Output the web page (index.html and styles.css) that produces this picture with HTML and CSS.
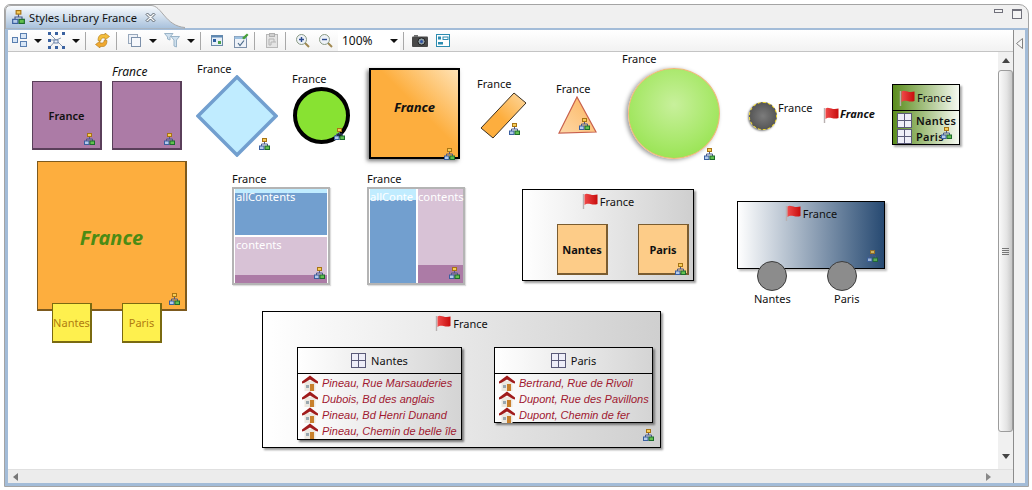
FILE: index.html
```html
<!DOCTYPE html>
<html lang="fr">
<head>
    <meta charset="UTF-8">
    <title>Styles Library France</title>
    <link rel="stylesheet" href="styles.css">
</head>
<body>
<svg class="defs" width="0" height="0">
    <defs>
        <linearGradient id="flagRed" x1="0" y1="0" x2="1" y2="0">
            <stop offset="0" stop-color="#f04a4a"/><stop offset="1" stop-color="#c80c0c"/>
        </linearGradient>
        <linearGradient id="rotFill" x1="0" y1="1" x2="1" y2="0">
            <stop offset="0.45" stop-color="#fdae3e"/><stop offset="1" stop-color="#fdd8a0"/>
        </linearGradient>
        <linearGradient id="triFill" x1="0" y1="1" x2="1" y2="0">
            <stop offset="0" stop-color="#fdd8a8"/><stop offset="1" stop-color="#fcb45c"/>
        </linearGradient>
        <symbol id="hier" viewBox="0 0 11 12">
            <path d="M5.5 3.5V6M2.5 8V6H8.5V8" fill="none" stroke="#4a5a8a"/>
            <rect x="3.5" y="0.5" width="4" height="3" fill="#f6cd5a" stroke="#a87414"/>
            <rect x="0.5" y="8" width="4.5" height="3.5" fill="#b4cbea" stroke="#3a5fa0"/>
            <rect x="6" y="8" width="4.5" height="3.5" fill="#62c04e" stroke="#1d6b2c"/>
        </symbol>
        <symbol id="flag" viewBox="0 0 16 16">
            <path d="M1.5 1V16" stroke="#b8b0b0" stroke-width="1.4"/>
            <path d="M2.500 1.500C5 0 7 1.500 10 2C12 2.300 14 2 15.500 1.600V11C13 12 11 11.600 8.500 11C6 10.400 4 10.600 2.500 12Z" fill="url(#flagRed)"/>
        </symbol>
        <symbol id="grid" viewBox="0 0 15 15">
            <rect x="0.5" y="0.5" width="14" height="14" fill="#eeeef8" stroke="#5a5a78"/>
            <path d="M7.5 1V14M1 7.5H14" stroke="#5a5a78"/>
        </symbol>
        <symbol id="house" viewBox="0 0 16 16">
            <rect x="2.500" y="6" width="11" height="10" fill="#ece8e0"/>
            <rect x="8" y="9" width="4" height="7" fill="#c8802c"/>
            <rect x="4" y="10" width="3" height="3" fill="#9aa8b0"/>
            <path d="M0 6.500L8 0.500L16 6.500V8.500L14 8L8 4.500L2 8L0 8.500Z" fill="#a01c1c"/>
        </symbol>
    </defs>
</svg>

<div class="pane">
    <div class="tabstrip">
        <div class="tab">
            <svg class="tab-shape" width="180" height="24" viewBox="0 0 180 24">
                <defs>
                    <linearGradient id="tabFill" x1="0" y1="0" x2="0" y2="1">
                        <stop offset="0" stop-color="#fafcfe"/><stop offset="1" stop-color="#a5bfdb"/>
                    </linearGradient>
                </defs>
                <path d="M0.5 24V6Q0.5 0.5 6 0.5H146C157 0.5 160 21 180 22.5V24Z" fill="url(#tabFill)" stroke="#a8a8a8"/>
            </svg>
            <svg class="ico tab-ico" width="13" height="14"><use href="#hier"/></svg>
            <span class="tab-title">Styles Library France</span>
            <svg class="tab-close" width="11" height="11" viewBox="0 0 11 11">
                <path d="M1 2.5L2.5 1L5.5 4L8.500 1L10 2.5L7 5.500L10 8.500L8.500 10L5.500 7L2.500 10L1 8.500L4 5.500Z" fill="#f8f8f8" stroke="#5c6670"/>
            </svg>
        </div>
        <div class="win-btns">
            <span class="win-min"></span>
            <span class="win-max"></span>
        </div>
    </div>

    <div class="editor">
        <div class="main">
            <div class="toolbar">
                <svg class="t t1" width="15" height="15" viewBox="0 0 15 15"><g fill="#d8e6f6" stroke="#5a7fb0"><rect x="0.500" y="4.500" width="5" height="5"/><rect x="8.500" y="0.500" width="6" height="5"/><rect x="8.500" y="8.500" width="6" height="5"/></g></svg>
                <i class="arrow a1"></i>
                <svg class="t t2" width="17" height="17" viewBox="0 0 17 17"><path d="M2 2L15 15M2 15L8 8M2 8H8" stroke="#8a9ab0" fill="none"/><path d="M8 8L13 6" stroke="#8a9ab0"/><g fill="#3a62a0"><rect x="0" y="0" width="3" height="3"/><rect x="7" y="0" width="3" height="3"/><rect x="14" y="0" width="3" height="3"/><rect x="0" y="7" width="3" height="3"/><rect x="0" y="14" width="3" height="3"/><rect x="7" y="14" width="3" height="3"/><rect x="14" y="14" width="3" height="3"/></g><rect x="6" y="8" width="4" height="3" fill="#e8eef8" stroke="#6a82a8"/></svg>
                <i class="arrow a2"></i>
                <i class="sep s1"></i>
                <svg class="t t3" width="15" height="15" viewBox="0 0 15 15"><path d="M7 1.500H10V0L14.500 3.500L10 7V5H8C6.500 5 6 6 6 7.500H3C3 4 4.500 1.500 7 1.500Z" fill="#f4be3c" stroke="#b07a18" stroke-width="0.600"/><path d="M8 13.500H5V15L0.500 11.500L5 8V10H7C8.500 10 9 9 9 7.500H12C12 11 10.500 13.500 8 13.500Z" fill="#f0a830" stroke="#b07a18" stroke-width="0.600"/></svg>
                <i class="sep s2"></i>
                <svg class="t t4" width="13" height="13" viewBox="0 0 13 13"><rect x="0.500" y="0.500" width="9" height="9" fill="#eef2f8" stroke="#98a8bc"/><rect x="3.500" y="3.500" width="9" height="9" fill="#f6f8fc" stroke="#7c90aa"/></svg>
                <i class="arrow a3"></i>
                <svg class="t t5" width="16" height="15" viewBox="0 0 16 15"><g fill="#cfe0ee" stroke="#9ab4c8"><path d="M0.500 0.500H9L6 4V7L3.500 6V4Z"/><path d="M7 3.500H15.500L12.500 7V14L10 13V7Z"/></g></svg>
                <i class="arrow a4"></i>
                <i class="sep s3"></i>
                <svg class="t t6" width="12" height="11" viewBox="0 0 12 11"><rect x="0.500" y="0.500" width="11" height="10" fill="#e8f0f8" stroke="#6a8aa8"/><rect x="0.500" y="0.500" width="11" height="2" fill="#5c88b4"/><rect x="2" y="4" width="3" height="3" fill="#2c5ea0"/><rect x="7" y="6" width="3" height="3" fill="#4aa04a"/></svg>
                <svg class="t t7" width="15" height="15" viewBox="0 0 15 15"><rect x="0.500" y="3.500" width="12" height="11" fill="#eef2f8" stroke="#7c90aa"/><rect x="0.500" y="3.500" width="12" height="2.500" fill="#9cc0e0"/><path d="M4 10L6 12.500L10 7.500" fill="none" stroke="#4a6a8a" stroke-width="1.200"/><path d="M8 5L13 0.500L14.500 2L10 6.500Z" fill="#48a038"/></svg>
                <i class="sep s4"></i>
                <svg class="t t8" width="12" height="15" viewBox="0 0 12 15"><rect x="0.500" y="1.500" width="11" height="13" fill="#e4e4e4" stroke="#b8b8b8"/><rect x="3.500" y="0.500" width="5" height="3" fill="#d0d0d0" stroke="#b0b0b0"/><path d="M3 6H8V9H5V12H3ZM8 9H10" fill="none" stroke="#b4b4b4"/></svg>
                <i class="sep s5"></i>
                <svg class="t t9" width="14" height="14" viewBox="0 0 14 14"><path d="M9 9L13 13" stroke="#a08850" stroke-width="2"/><circle cx="5.500" cy="5.500" r="5" fill="#eef2f8" stroke="#8a9a84"/><path d="M3 5.500H8M5.500 3V8" stroke="#2c4c90" stroke-width="1.400"/></svg>
                <svg class="t t10" width="14" height="14" viewBox="0 0 14 14"><path d="M9 9L13 13" stroke="#a08850" stroke-width="2"/><circle cx="5.500" cy="5.500" r="5" fill="#eef2f8" stroke="#8a9a84"/><path d="M3 5.500H8" stroke="#2c4c90" stroke-width="1.400"/></svg>
                <div class="combo"><span class="combo-val">100%</span><i class="arrow a5"></i></div>
                <i class="sep s6"></i>
                <svg class="t t11" width="16" height="12" viewBox="0 0 16 12"><rect x="0" y="1.500" width="16" height="10.500" rx="1" fill="#484848"/><rect x="2" y="0" width="4" height="2" fill="#707070"/><circle cx="9.500" cy="6.500" r="3.600" fill="#90a0a8" stroke="#202020"/><circle cx="9.500" cy="6.500" r="1.500" fill="#3050a0"/></svg>
                <svg class="t t12" width="14" height="13" viewBox="0 0 14 13"><rect x="0.500" y="0.500" width="13" height="12" fill="#fff" stroke="#2c8cb0"/><rect x="2" y="2.500" width="3" height="3" fill="#2c8cb0"/><rect x="7" y="3" width="5" height="2.500" fill="none" stroke="#2c8cb0"/><rect x="2" y="8" width="5" height="2.500" fill="#2c8cb0"/></svg>
            </div>

            <div class="view">
                <div class="canvas">
                    <!-- first row -->
                    <div class="node box purple p1"><b class="mid">France</b></div>
                    <span class="lbl it l-p2">France</span>
                    <div class="node box purple p2"></div>
                    <svg class="hi h-p1"><use href="#hier"/></svg>
                    <svg class="hi h-p2"><use href="#hier"/></svg>

                    <span class="lbl l-dia">France</span>
                    <svg class="node dia" width="82" height="82" viewBox="0 0 82 82"><path d="M41 2L80 41L41 80L2 41Z" fill="#c0ecff" stroke="#729fcf" stroke-width="3.500"/></svg>
                    <svg class="hi h-dia"><use href="#hier"/></svg>

                    <span class="lbl l-cir">France</span>
                    <div class="node cir"></div>
                    <svg class="hi h-cir"><use href="#hier"/></svg>

                    <div class="node grad-sq"><b class="mid it big">France</b></div>
                    <svg class="hi h-sq"><use href="#hier"/></svg>

                    <span class="lbl l-rot">France</span>
                    <svg class="node rot" width="50" height="50" viewBox="0 0 50 50"><path d="M33 1L45 11L12 46L0 36Z" transform="translate(1 0)" fill="url(#rotFill)" stroke="#3c3020"/></svg>
                    <svg class="hi h-rot"><use href="#hier"/></svg>

                    <span class="lbl l-tri">France</span>
                    <svg class="node tri" width="40" height="38" viewBox="0 0 40 38"><path d="M19 1L38 36L1 37Z" fill="url(#triFill)" stroke="#c8604c" stroke-width="1.200"/></svg>
                    <svg class="hi h-tri"><use href="#hier"/></svg>

                    <span class="lbl l-ball">France</span>
                    <div class="node ball"></div>
                    <svg class="hi h-ball"><use href="#hier"/></svg>

                    <div class="node dark"></div>
                    <span class="lbl l-dark">France</span>

                    <svg class="node fl f-note"><use href="#flag"/></svg>
                    <b class="lbl it l-note">France</b>

                    <div class="node mini">
                        <div class="mini-head"><svg class="fl-in"><use href="#flag"/></svg><span>France</span></div>
                        <div class="mini-row"><svg class="gr"><use href="#grid"/></svg><span>Nantes</span></div>
                        <div class="mini-row"><svg class="gr"><use href="#grid"/></svg><span>Paris</span></div>
                    </div>
                    <svg class="hi h-mini"><use href="#hier"/></svg>

                    <!-- second row -->
                    <div class="node box big-or"><b class="mid it green">France</b></div>
                    <svg class="hi h-bigor"><use href="#hier"/></svg>
                    <div class="node port po1">Nantes</div>
                    <div class="node port po2">Paris</div>

                    <span class="lbl l-c1">France</span>
                    <div class="node comp c1">
                        <div class="c1-a"><span>allContents</span></div>
                        <div class="c1-b"><span>contents</span></div>
                    </div>
                    <svg class="hi h-c1"><use href="#hier"/></svg>

                    <span class="lbl l-c2">France</span>
                    <div class="node comp c2">
                        <div class="c2-a"><span>allConte</span></div>
                        <div class="c2-b"><span>contents</span></div>
                    </div>
                    <svg class="hi h-c2"><use href="#hier"/></svg>

                    <div class="node cont ct1">
                        <div class="cont-head"><svg class="fl-in"><use href="#flag"/></svg><span>France</span></div>
                        <div class="ct1-body">
                            <div class="box peach">Nantes</div>
                            <div class="box peach">Paris</div>
                        </div>
                    </div>
                    <svg class="hi h-ct1"><use href="#hier"/></svg>

                    <div class="node cont truck">
                        <div class="cont-head"><svg class="fl-in"><use href="#flag"/></svg><span>France</span></div>
                    </div>
                    <svg class="hi h-truck"><use href="#hier"/></svg>
                    <div class="node wheel w1"></div>
                    <div class="node wheel w2"></div>
                    <span class="lbl l-w1">Nantes</span>
                    <span class="lbl l-w2">Paris</span>

                    <!-- third row -->
                    <div class="node cont ct2">
                        <div class="cont-head"><svg class="fl-in"><use href="#flag"/></svg><span>France</span></div>
                    </div>
                    <div class="node city city-n">
                        <div class="city-head"><svg class="gr"><use href="#grid"/></svg><span>Nantes</span></div>
                        <ul class="addr">
                            <li><svg class="hs"><use href="#house"/></svg>Pineau, Rue Marsauderies</li>
                            <li><svg class="hs"><use href="#house"/></svg>Dubois, Bd des anglais</li>
                            <li><svg class="hs"><use href="#house"/></svg>Pineau, Bd Henri Dunand</li>
                            <li><svg class="hs"><use href="#house"/></svg>Pineau, Chemin de belle île</li>
                        </ul>
                    </div>
                    <div class="node city city-p">
                        <div class="city-head"><svg class="gr"><use href="#grid"/></svg><span>Paris</span></div>
                        <ul class="addr">
                            <li><svg class="hs"><use href="#house"/></svg>Bertrand, Rue de Rivoli</li>
                            <li><svg class="hs"><use href="#house"/></svg>Dupont, Rue des Pavillons</li>
                            <li><svg class="hs"><use href="#house"/></svg>Dupont, Chemin de fer</li>
                        </ul>
                    </div>
                    <svg class="hi h-ct2"><use href="#hier"/></svg>
                </div>
                <div class="vscroll">
                    <i class="up"></i>
                    <div class="thumb"><i class="grip"></i></div>
                    <i class="down"></i>
                </div>
            </div>

            <div class="hscroll">
                <i class="left"></i>
                <i class="right"></i>
            </div>
        </div>
        <div class="trim">
            <svg width="7" height="11" viewBox="0 0 7 11"><path d="M6.500 0.500V10.500L0.500 5.500Z" fill="#f6f6f6" stroke="#808080"/></svg>
        </div>
    </div>
</div>
</body>
</html>
```

FILE: styles.css
```css
* { box-sizing: border-box; }
html, body { margin: 0; padding: 0; }
body { width: 1032px; height: 490px; background: #fff; font-family: "Noto Sans", "Open Sans", sans-serif; font-size: 11px; color: #111; overflow: hidden; }
.defs { position: absolute; }
svg { display: block; }
i { display: block; font-style: normal; }

.pane { margin: 4px 0 0 4px; width: 1025px; height: 483px; border: 1px solid #a4a4a4; border-radius: 6px 10px 0 0; background: #f0f0f0; display: flex; flex-direction: column; }

/* tab strip */
.tabstrip { height: 23px; display: flex; justify-content: space-between; flex: none; }
.tab { position: relative; width: 180px; height: 24px; display: flex; align-items: center; }
.tab-shape { position: absolute; left: 0; top: 0; }
.tab-ico { position: relative; margin-left: 7px; width: 13px; height: 14px; }
.tab-title { position: relative; margin-left: 4px; font-size: 11.2px; color: #111; white-space: nowrap; }
.tab-close { position: relative; margin-left: 8px; }
.win-btns { display: flex; gap: 9px; margin: 4px 6px 0 0; }
.win-min { width: 9px; height: 4px; margin-top: 0; border: 1px solid #70707a; background: #f4f4f4; }
.win-max { width: 10px; height: 10px; border: 1px solid #70707a; border-top-width: 2px; background: #f4f4f4; }

.editor { flex: 1; display: flex; border: solid #a3bcd8; border-width: 2px 3px 3px 3px; min-height: 0; }
.main { width: 1005px; flex: none; display: flex; flex-direction: column; }
.trim { flex: 1; border-left: 1px solid #8c8c8c; background: #f2f2f2; padding: 8px 0 0 2px; }

/* toolbar */
.toolbar { height: 22px; flex: none; display: flex; align-items: center; background: linear-gradient(#fff, #f2f2f2); border-bottom: 1px solid #c4c4c4; position: relative; }
.arrow { width: 0; height: 0; border: 4px solid transparent; border-top: 4px solid #111; border-bottom: 0; flex: none; }
.sep { width: 1px; height: 18px; background: #a8a8a8; flex: none; }
.t { flex: none; }
.t1 { margin-left: 4px; }
.a1 { margin-left: 7px; }
.t2 { margin-left: 6px; }
.a2 { margin-left: 7px; }
.s1 { margin-left: 5px; }
.t3 { margin-left: 9px; }
.s2 { margin-left: 6px; }
.t4 { margin-left: 11px; }
.a3 { margin-left: 8px; }
.t5 { margin-left: 7px; }
.a4 { margin-left: 7px; }
.s3 { margin-left: 5px; }
.t6 { margin-left: 10px; }
.t7 { margin-left: 11px; }
.s4 { margin-left: 5px; }
.t8 { margin-left: 11px; }
.s5 { margin-left: 7px; }
.t9 { margin-left: 10px; }
.t10 { margin-left: 9px; }
.combo { width: 62px; height: 21px; margin-left: 5px; background: #fff; display: flex; align-items: center; justify-content: space-between; padding: 0 2px 0 4px; flex: none; }
.combo-val { font-size: 12px; }
.s6 { margin-left: 3px; }
.t11 { margin-left: 8px; }
.t12 { margin-left: 8px; }

.view { flex: 1; display: flex; min-height: 0; }

/* diagram: nodes sit freely on the canvas */
.canvas { width: 990px; position: relative; background: #fff; overflow: hidden; }
.node { position: absolute; }
.lbl { position: absolute; line-height: 14px; white-space: nowrap; }
.it { font-style: italic; }
.hi { position: absolute; width: 11px; height: 12px; }
.box { border: 1px solid #5a3f5a; border-right-width: 2px; border-bottom-width: 2px; }
.mid { display: flex; align-items: center; justify-content: center; width: 100%; height: 100%; }
.purple { background: #ac7ba6; width: 70px; height: 69px; font-size: 11px; }
.purple .mid { font-weight: 600; padding-top: 1px; }
.p1 { left: 24px; top: 29px; }
.p2 { left: 104px; top: 29px; }
.l-p2 { left: 104px; top: 13px; font-size: 12px; }
.h-p1 { left: 76px; top: 81px; }
.h-p2 { left: 156px; top: 81px; }

.l-dia { left: 189px; top: 10px; }
.dia { left: 188px; top: 23px; }
.h-dia { left: 251px; top: 86px; }

.l-cir { left: 284px; top: 20px; }
.cir { left: 285px; top: 35px; width: 57px; height: 57px; border-radius: 50%; border: 4px solid #000; background: #88e232; }
.h-cir { left: 326px; top: 76px; }

.grad-sq { left: 361px; top: 16px; width: 91px; height: 91px; border: 2px solid #000; background: linear-gradient(45deg, #fdae3e 55%, #ffe2b4 100%); box-shadow: -2px 2px 4px #777; }
.big { font-size: 13px; font-weight: 700; padding-bottom: 13px; }
.h-sq { left: 436px; top: 96px; }

.l-rot { left: 469px; top: 25px; }
.rot { left: 472px; top: 40px; }
.h-rot { left: 501px; top: 71px; }

.l-tri { left: 548px; top: 30px; }
.tri { left: 550px; top: 44px; }
.h-tri { left: 571px; top: 66px; }

.l-ball { left: 614px; top: 0; }
.ball { left: 620px; top: 16px; width: 92px; height: 91px; border-radius: 50%; border: 1px solid #f0b87a; background: radial-gradient(circle at 50% 40%, #c8f09c 0, #a8e86a 55%, #8ce040 100%); box-shadow: -2px 1px 4px #999; }
.h-ball { left: 696px; top: 96px; }

.dark { left: 741px; top: 50px; width: 28px; height: 28px; border-radius: 50%; border: 1px dashed #e8d020; background: radial-gradient(circle, #7c7c7c 0, #484848 100%); box-shadow: -1px 1px 2px #888; }
.l-dark { left: 770px; top: 49px; }
.fl { width: 16px; height: 16px; }
.f-note { left: 815px; top: 55px; }
.l-note { left: 832px; top: 55px; font-weight: 700; }

.mini { left: 884px; top: 32px; width: 68px; height: 61px; border: 1px solid #000; background: linear-gradient(90deg, #5a8c1c, #f6faf2); box-shadow: 2px 2px 2px #aaa; }
.mini-head { height: 26px; display: flex; align-items: center; padding-left: 6px; gap: 2px; border-bottom: 1px solid #000; }
.fl-in { width: 16px; height: 16px; flex: none; }
.mini-row { height: 16px; display: flex; align-items: center; padding-left: 4px; gap: 4px; font-size: 11px; font-weight: 600; letter-spacing: 0.3px; }
.mini-head + .mini-row { margin-top: 1px; }
.gr { width: 15px; height: 15px; flex: none; }
.h-mini { left: 933px; top: 75px; }

.big-or { left: 29px; top: 109px; width: 150px; height: 150px; background: #fdae3e; border-color: #7d5a1e; }
.green { font-size: 20px; font-weight: 700; color: #4b8b14; padding-top: 4px; }
.h-bigor { left: 161px; top: 241px; }
.port { top: 251px; width: 40px; height: 40px; background: #fef04e; border: 1px solid #7a6a10; border-right-width: 2px; border-bottom-width: 2px; color: #b07c10; display: flex; align-items: center; justify-content: center; }
.po1 { left: 44px; }
.po2 { left: 114px; }

.comp { top: 135px; width: 98px; height: 98px; border: 2px solid #b4b4b4; background: #fff; box-shadow: 1px 1px 1px #ddd; padding: 0; color: #fff; font-size: 11.2px; line-height: 14px; }
.l-c1 { left: 224px; top: 120px; }
.l-c2 { left: 359px; top: 120px; }
.c1 { left: 224px; }
.c2 { left: 359px; display: flex; gap: 2px; padding: 0 1px 0 1px; }
.c1-a { height: 46px; margin: 0 1px; background: linear-gradient(#c0ecff 4px, #729fcf 4px); padding: 0 1px; }
.c1-b { height: 46px; margin: 2px 1px 0; background: linear-gradient(#d8c2d6 38px, #ac7ba6 38px); padding: 1px 1px 0; }
.c1-a span, .c2-a span { position: relative; top: 1px; }
.c2-a { flex: none; width: 46px; background: linear-gradient(#c0ecff 11px, #729fcf 11px); overflow: hidden; white-space: nowrap; }
.c2-b { flex: none; width: 45px; background: linear-gradient(#d8c2d6 76px, #ac7ba6 76px); white-space: nowrap; }
.c2-b span { position: relative; top: 1px; }
.h-c1 { left: 306px; top: 215px; }
.h-c2 { left: 441px; top: 215px; }

.cont { border: 1px solid #000; background: linear-gradient(90deg, #fff, #cfcfcf); box-shadow: 2px 2px 2px #999; }
.cont-head { display: flex; align-items: center; justify-content: center; gap: 2px; height: 16px; margin-top: 3px; }
.ct1 { left: 514px; top: 137px; width: 172px; height: 92px; }
.ct1-body { display: flex; gap: 30px; padding-left: 34px; margin-top: 15px; }
.peach { width: 51px; height: 51px; background: #fdcc88; border-color: #7a5c30; display: flex; align-items: center; justify-content: center; font-weight: 700; }
.h-ct1 { left: 667px; top: 211px; }

.truck { left: 729px; top: 149px; width: 148px; height: 68px; background: linear-gradient(90deg, #fff, #274a72); box-shadow: 2px 2px 2px #bbb; }
.h-truck { left: 859px; top: 198px; opacity: 0.8; }
.wheel { top: 209px; width: 30px; height: 30px; border-radius: 50%; background: #8c8c8c; border: 1px solid #3c3c3c; }
.w1 { left: 749px; }
.w2 { left: 819px; }
.l-w1 { left: 746px; top: 240px; }
.l-w2 { left: 826px; top: 240px; }

.ct2 { left: 254px; top: 259px; width: 399px; height: 137px; }
.city { top: 295px; border: 1px solid #000; background: linear-gradient(90deg, #fff, #d4d4d4); box-shadow: 2px 2px 2px #777; }
.city-n { left: 289px; width: 165px; height: 93px; }
.city-p { left: 486px; width: 159px; height: 76px; }
.city-head { height: 26px; display: flex; align-items: center; justify-content: center; gap: 5px; border-bottom: 1px solid #000; padding-bottom: 1px; }
.addr { list-style: none; margin: 1px 0 0; padding: 0 0 0 4px; }
.addr li { height: 16px; display: flex; align-items: center; gap: 4px; font: italic 11px "Liberation Sans", Arial, sans-serif; color: #a01830; white-space: nowrap; }
.hs { width: 16px; height: 16px; flex: none; }
.h-ct2 { left: 635px; top: 377px; }

/* scrollbars */
.vscroll { flex: 1; background: #f0f0f0; display: flex; flex-direction: column; align-items: center; padding-top: 6px; }
.up { width: 0; height: 0; border: 4px solid transparent; border-bottom: 5px solid #444; border-top: 0; }
.thumb { width: 15px; height: 362px; margin-top: 7px; border: 1px solid #9c9c9c; border-radius: 3px; background: linear-gradient(90deg, #fafafa, #e4e4e4 60%, #c8c8c8); display: flex; align-items: center; justify-content: center; }
.grip { width: 7px; height: 7px; background: repeating-linear-gradient(#777 0 1px, transparent 1px 2px); }
.down { width: 0; height: 0; margin-top: 22px; border: 4px solid transparent; border-top: 5px solid #444; border-bottom: 0; }
.hscroll { height: 14px; flex: none; background: #ececec; border-top: 1px solid #e0e0e0; display: flex; justify-content: space-between; align-items: center; padding: 0 22px 0 5px; }
.left { width: 0; height: 0; border: 4px solid transparent; border-right: 5px solid #777; border-left: 0; }
.right { width: 0; height: 0; border: 4px solid transparent; border-left: 5px solid #888; border-right: 0; }
```
